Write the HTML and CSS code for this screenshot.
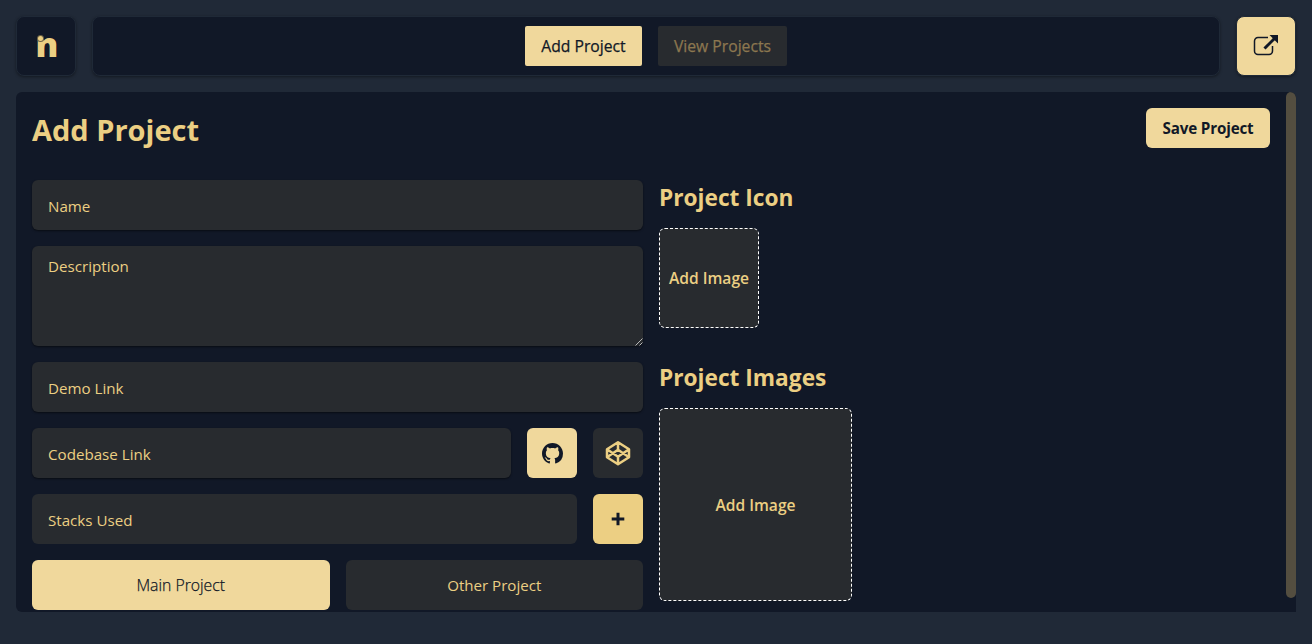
FILE: index.html
```html
<!DOCTYPE html>
<html lang="en">
<head>
<meta charset="utf-8">
<title>Add Project</title>
<link rel="stylesheet" href="styles.css">
</head>
<body>
<header class="topbar">
  <a class="tile logo"><span class="logo-mark">n</span></a>
  <nav class="tile nav">
    <a class="tab tab-active"><span>Add Project</span></a>
    <a class="tab tab-view"><span>View Projects</span></a>
  </nav>
  <a class="tile external">
    <svg width="26" height="24" viewBox="0 0 26 24" fill="none" stroke="currentColor">
      <path d="M15 3.500H5a3.500 3.500 0 0 0-3.500 3.500v10a3.500 3.500 0 0 0 3.500 3.500h11a3.500 3.500 0 0 0 3.500-3.500V12" stroke-width="1.500"/>
      <path d="M11.500 14.500 21.500 4.500" stroke-width="3"/>
      <path d="M16.500 1H25v8.500z" fill="currentColor" stroke="none"/>
    </svg>
  </a>
</header>
<main class="panel">
  <div class="content">
    <div class="heading">
      <h1>Add Project</h1>
      <button class="save">Save Project</button>
    </div>
    <div class="columns">
      <form class="fields">
        <div class="field">Name</div>
        <div class="field area">Description
          <svg class="grip" width="8" height="8" viewBox="0 0 8 8" stroke="#b8b8b8" stroke-width="1"><path d="M.5 7.500 7.500.5M4.500 7.500 7.500 4.500"/></svg>
        </div>
        <div class="field">Demo Link</div>
        <div class="row">
          <div class="field grow">Codebase Link</div>
          <div class="square light">
            <svg class="github" width="21" height="21" viewBox="0 0 16 16" fill="currentColor"><path d="M8 0C3.580 0 0 3.580 0 8c0 3.540 2.290 6.530 5.470 7.590.4.070.55-.17.55-.38 0-.19-.01-.82-.01-1.490-2.010.37-2.530-.49-2.690-.94-.09-.23-.48-.94-.82-1.130-.28-.15-.68-.52-.01-.53.63-.01 1.080.58 1.230.82.72 1.210 1.870.87 2.330.66.070-.52.28-.87.51-1.070-1.780-.2-3.640-.89-3.640-3.950 0-.87.31-1.590.82-2.150-.08-.2-.36-1.020.08-2.120 0 0 .67-.21 2.200.82.64-.18 1.320-.27 2-.27s1.360.09 2 .27c1.530-1.040 2.200-.82 2.200-.82.44 1.100.16 1.920.08 2.120.51.56.82 1.270.82 2.150 0 3.070-1.870 3.750-3.650 3.950.29.25.54.73.54 1.480 0 1.070-.01 1.930-.01 2.200 0 .21.15.46.55.38A8.010 8.010 0 0 0 16 8c0-4.420-3.580-8-8-8z"/></svg>
          </div>
          <div class="square dark">
            <svg width="26" height="26" viewBox="0 0 26 26" fill="none" stroke="currentColor" stroke-width="2.500" stroke-linejoin="round"><path d="M13 2.200 24 9.300v7.900l-11 7.100L2 17.200V9.300zM2 9.300l11 7.400L24 9.300M2 17.200l11-7.400 11 7.400M13 2.200v7.600M13 16.700v7.600"/></svg>
          </div>
        </div>
        <div class="row">
          <div class="field grow flat">Stacks Used</div>
          <div class="square plus">
            <svg width="14" height="14" viewBox="0 0 14 14" stroke="currentColor" stroke-width="3"><path d="M7 .700v12.600M.700 7h12.600"/></svg>
          </div>
        </div>
        <div class="row">
          <div class="choice light"><span class="thin">Main Project</span></div>
          <div class="choice dark"><span class="snug">Other Project</span></div>
        </div>
      </form>
      <section class="media">
        <h2>Project Icon</h2>
        <div class="drop drop-small"><span>Add Image</span></div>
        <h2>Project Images</h2>
        <div class="drop drop-large"><span>Add Image</span></div>
      </section>
    </div>
  </div>
  <div class="scroll"><div class="thumb"></div></div>
</main>
</body>
</html>
```
FILE: styles.css
```css
* { box-sizing: border-box; }
body {
  margin: 0;
  height: 644px;
  padding: 16px;
  overflow: hidden;
  background: #202937;
  color: #eccf83;
  font: 16px/24px "Open Sans", "Noto Sans", sans-serif;
  display: flex;
  flex-direction: column;
  gap: 16px;
}
h1, h2 { margin: 0; font-weight: 700; white-space: nowrap; }
.topbar { display: flex; gap: 16px; height: 60px; flex: none; }
.tile {
  display: flex;
  align-items: center;
  justify-content: center;
  background: #111827;
  border: 1px solid #1f2937;
  border-radius: 8px;
  box-shadow: 0 1px 3px rgba(0, 0, 0, .4);
}
.logo, .external { width: 60px; flex: none; }
.logo-mark {
  position: relative;
  font-size: 34px;
  font-weight: 800;
  line-height: 40px;
  top: -2px;
  left: 1px;
}
.logo-mark::before {
  content: "";
  position: absolute;
  left: 2px;
  top: 12px;
  width: 5px;
  height: 5px;
  border-radius: 50%;
  background: #eccf83;
  box-shadow: 0 0 0 1px #6c6248;
}
.nav { flex: 1; gap: 16px; }
.tab {
  height: 40px;
  display: flex;
  align-items: center;
  justify-content: center;
  border-radius: 2px;
  font-size: 15.7px;
  font-weight: 500;
  -webkit-text-stroke: .25px currentColor;
  white-space: nowrap;
}
.tab-active { width: 117px; background: #f0d89c; color: #111827; }
.tab-view { width: 129px; background: #282b2f; color: #8c774f; }
.external { background: #f0d89c; color: #111827; }
.panel {
  display: flex;
  height: 520px;
  overflow: hidden;
  background: #111827;
  border-radius: 6px 6px 0 6px;
}
.content { flex: 1; padding: 16px; }
.heading { display: flex; justify-content: space-between; height: 72px; }
h1 { font-size: 29px; line-height: 43px; }
.save {
  width: 124px;
  height: 40px;
  padding: 0;
  border: 0;
  border-radius: 6px;
  background: #f0d89c;
  color: #111827;
  font: 700 15.2px/24px "Open Sans", sans-serif;
  letter-spacing: -.15px;
  white-space: nowrap;
}
.columns { display: grid; grid-template-columns: 1fr 1fr; gap: 16px; }
.fields { display: flex; flex-direction: column; gap: 16px; }
.field {
  height: 50px;
  padding: 14px 16px 0;
  border-radius: 6px;
  background: #282b2f;
  box-shadow: 0 1px 2px rgba(0, 0, 0, .5);
  font-size: 15.15px;
  white-space: nowrap;
}
.flat { box-shadow: none; }
.area { position: relative; height: 100px; padding-top: 8px; }
.grip { position: absolute; right: 0; bottom: 0; }
.row { display: flex; gap: 16px; }
.grow { flex: 1; }
.square, .choice {
  height: 50px;
  display: flex;
  align-items: center;
  justify-content: center;
  border-radius: 6px;
}
.square { width: 50px; }
.choice { flex: 1; white-space: nowrap; }
.light { background: #f0d89c; color: #111827; }
.dark { background: #282b2f; color: #eccf83; }
.plus { background: #eccf83; color: #111827; }
.github { margin-top: 1px; }
.snug { font-size: 15.1px; }
.thin { font-weight: 300; font-size: 15.8px; -webkit-text-stroke: .25px #111827; }
h2 { font-size: 22.7px; line-height: 35px; margin-bottom: 13px; }
.drop {
  display: flex;
  align-items: center;
  justify-content: center;
  background: #282b2f;
  border: 1px dashed #fff;
  border-radius: 6px;
  font-size: 15.6px;
  font-weight: 600;
  white-space: nowrap;
}
.drop-small { width: 100px; height: 100px; margin-bottom: 32px; }
.drop-large { width: 193px; height: 193px; }
.scroll { width: 10px; }
.thumb { height: 506px; border-radius: 5px; background: #544e40; }
```
